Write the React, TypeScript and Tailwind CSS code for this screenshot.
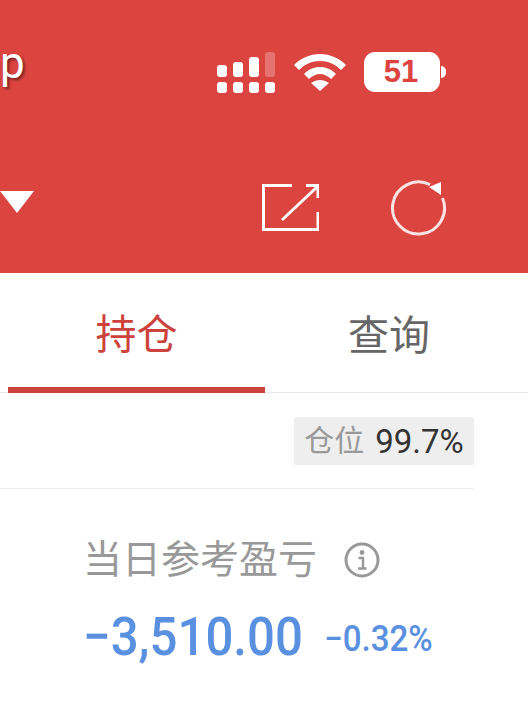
const cjk = "font-['Roboto','Noto_Sans_CJK_SC',sans-serif]";

function SignalIcon() {
  return (
    <svg width="58" height="41" viewBox="0 0 58 41" className="shrink-0">
      <g fill="#fff">
        <rect x="0" y="13" width="10" height="12" rx="3" />
        <rect x="16" y="10" width="10" height="15" rx="3" />
        <rect x="32" y="5" width="10" height="20" rx="3" />
        <rect x="48" y="0" width="10" height="25" rx="3" fillOpacity="0.25" />
        <rect x="0" y="30" width="10" height="11" rx="3" />
        <rect x="16" y="30" width="10" height="11" rx="3" />
        <rect x="32" y="30" width="10" height="11" rx="3" />
        <rect x="48" y="30" width="10" height="11" rx="3" />
      </g>
    </svg>
  );
}

function WifiIcon() {
  return (
    <svg width="52" height="38" viewBox="0 0 52 38" fill="#fff" className="shrink-0">
      <path d="M26 0 C36 0 45 4 52 11 L47 16 C41 10 34 7 26 7 C18 7 11 10 5 16 L0 11 C7 4 16 0 26 0 Z" />
      <path d="M26 13 C32 13 37 15 42 20 L37 25 C34 22 30 20 26 20 C22 20 18 22 15 25 L10 20 C15 15 20 13 26 13 Z" />
      <path d="M26 37 L17 29 C20 27 23 26 26 26 C29 26 32 27 35 29 Z" />
    </svg>
  );
}

function ExternalIcon() {
  return (
    <svg width="58" height="48" viewBox="0 0 58 48" fill="none" stroke="#fff" strokeWidth="3" className="shrink-0">
      <path d="M31 2.5 H2.5 V46.5 H57 V29" />
      <path d="M57 15 V2.5 H45" />
      <path d="M21 37 L56 4" />
    </svg>
  );
}

function RefreshIcon() {
  return (
    <svg width="58" height="56" viewBox="0 0 58 56" fill="none" className="shrink-0">
      <path d="M41 4.7 A26 26 0 1 0 53.5 18" stroke="#ffffff" strokeOpacity="0.85" strokeWidth="3" />
      <path d="M40 7 L52 2 L52 15 Z" fill="#fff" />
    </svg>
  );
}

function InfoIcon() {
  return (
    <svg width="36" height="36" viewBox="0 0 36 36" fill="none" className="shrink-0">
      <circle cx="18" cy="18" r="16" stroke="#999" strokeWidth="3" />
      <circle cx="18" cy="10.5" r="2.4" fill="#999" />
      <path d="M14.5 16 H19 V26 M14 26.5 H22.5" stroke="#999" strokeWidth="2.4" />
    </svg>
  );
}

export default function App() {
  return (
    <div className={`w-[528px] h-[715px] overflow-hidden bg-white ${cjk}`}>
      <header className="h-[273px] bg-[#dc4440] flex flex-col">
        <div className="h-[52px] mt-[52px] flex items-start">
          <span className="-mt-[19px] text-[44px] leading-[60px] text-white [text-shadow:2px_2px_3px_#7a2020] font-['Roboto',sans-serif]">p</span>
          <div className="ml-auto mr-[82px] flex items-start">
            <SignalIcon />
            <div className="ml-[19px] mt-[2px]"><WifiIcon /></div>
            <div className="ml-[18px] pr-[2px] w-[76px] h-[40px] rounded-[11px] bg-white flex items-center justify-center text-[#dc4440] text-[31px] font-bold font-['Liberation_Sans',sans-serif]">51</div>
            <div className="ml-[1px] mt-[14px] w-[5px] h-[12px] rounded-r-full bg-white" />
          </div>
        </div>
        <div className="mt-[76px] flex items-start">
          <div className="mt-[11px] w-0 h-0 border-l-[17px] border-r-[17px] border-t-[22px] border-l-transparent border-r-transparent border-t-white" />
          <div className="ml-auto mr-[81px] flex items-start">
            <div className="mt-[3px]"><ExternalIcon /></div>
            <div className="ml-[70px]"><RefreshIcon /></div>
          </div>
        </div>
      </header>
      <nav className="h-[120px] flex border-b border-[#e8e8e8] pl-[8px] pr-[15px]">
        <div className="w-[257px] h-[120px] pt-[10px] border-b-[6px] border-[#cc423c] flex items-center justify-center text-[#cc423c] text-[41px] leading-none">持仓</div>
        <div className="w-[248px] h-[120px] pt-[6px] flex items-center justify-center text-[#666] text-[41px] leading-none">查询</div>
      </nav>
      <div className="w-[474px] h-[96px] border-b border-[#eeeeee] flex items-start justify-end pt-[24px]">
        <div className="w-[180px] h-[48px] bg-[#eeeeee] rounded-[2px] flex items-center justify-center gap-[11px] leading-none">
          <span className="text-[#999] text-[30px]">仓位</span>
          <span className="text-[#333] text-[33px]">99.7%</span>
        </div>
      </div>
      <div className="pl-[83px] pt-[49px]">
        <div className="flex items-center h-[44px]">
          <span className="text-[#999] text-[39px] leading-none">当日参考盈亏</span>
          <div className="ml-[27px]"><InfoIcon /></div>
        </div>
        <div className="mt-[23px] flex items-baseline h-[64px]">
          <span className="w-[241px] inline-block origin-left scale-x-[0.91] text-[#5a90e0] text-[54px] leading-[64px] font-medium whitespace-nowrap">−3,510.00</span>
          <span className="relative -top-[4px] inline-block origin-left scale-x-[0.92] text-[#5a90e0] text-[36px] leading-none font-medium whitespace-nowrap">−0.32%</span>
        </div>
      </div>
    </div>
  );
}
